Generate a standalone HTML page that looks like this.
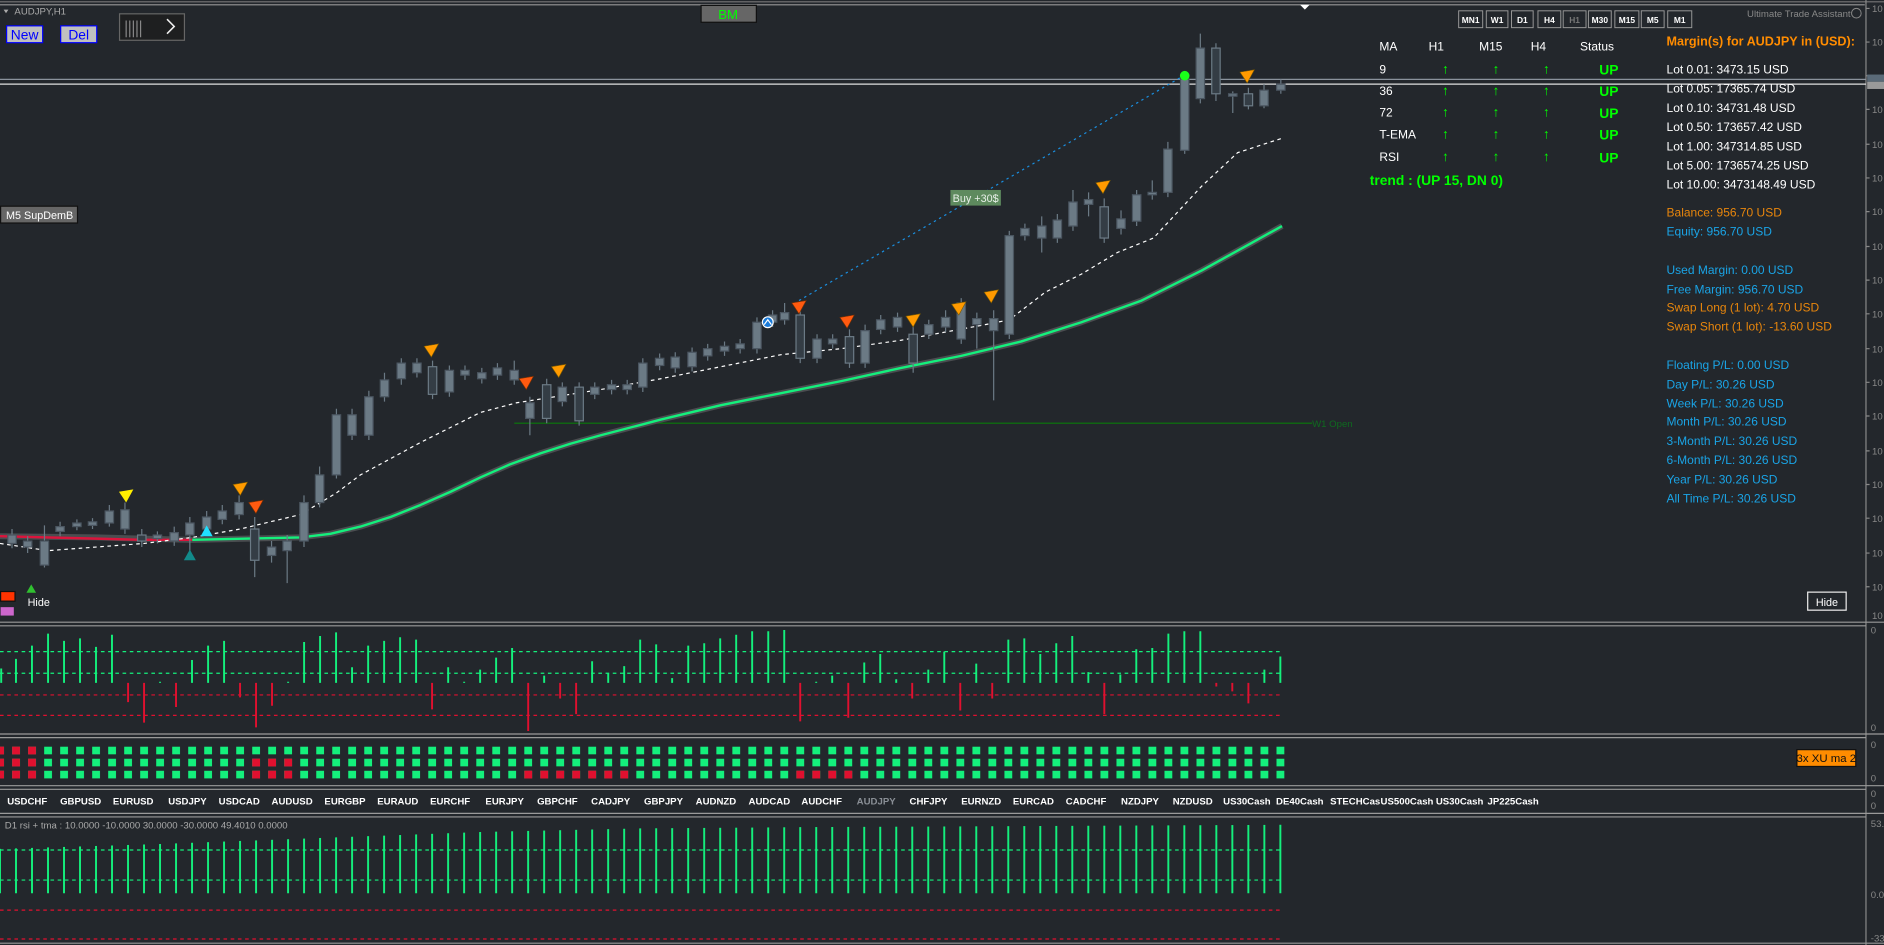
<!DOCTYPE html>
<html><head><meta charset="utf-8"><style>
html,body{margin:0;padding:0;background:#23272c;overflow:hidden}
svg{display:block}
text{font-family:"Liberation Sans",Arial,sans-serif}
</style></head><body>
<svg width="1884" height="945" viewBox="0 0 1568 786" preserveAspectRatio="none" xmlns="http://www.w3.org/2000/svg">
<defs>
<pattern id="sq" patternUnits="userSpaceOnUse" x="-3.2" y="621" width="13.32" height="10"><rect x="0" y="0" width="6.5" height="6.5" fill="#14f07c"/></pattern>
<pattern id="vb" patternUnits="userSpaceOnUse" x="-0.8" y="0" width="13.32" height="10"><rect x="0" y="0" width="1.6" height="10" fill="#14f07c"/></pattern>
</defs>
<rect width="1568" height="786" fill="#23272c"/>
<line x1="0" y1="1.5" x2="1568" y2="1.5" stroke="#777"/>
<line x1="0" y1="4" x2="1552" y2="4" stroke="#999"/>
<line x1="1553" y1="0" x2="1553" y2="786" stroke="#888"/>
<g stroke="#888"><path d="M1553 7h3M1553 35h3M1553 63h3M1553 91h3M1553 120h3M1553 148h3M1553 176h3M1553 205h3M1553 233h3M1553 261h3M1553 290h3M1553 318h3M1553 346h3M1553 375h3M1553 403h3M1553 431h3M1553 460h3M1553 488h3"/></g>
<g fill="#888" font-size="8">
<text x="1558" y="10">10</text><text x="1558" y="38">10</text><text x="1558" y="94">10</text><text x="1558" y="123">10</text><text x="1558" y="151">10</text><text x="1558" y="179">10</text><text x="1558" y="208">10</text><text x="1558" y="236">10</text><text x="1558" y="264">10</text><text x="1558" y="293">10</text><text x="1558" y="321">10</text><text x="1558" y="349">10</text><text x="1558" y="378">10</text><text x="1558" y="406">10</text><text x="1558" y="434">10</text><text x="1558" y="463">10</text><text x="1558" y="491">10</text><text x="1558" y="515">10</text>
<text x="1557" y="527">0</text><text x="1557" y="608">0</text><text x="1557" y="622">0</text><text x="1557" y="650">0</text><text x="1557" y="663">0</text><text x="1557" y="673">0</text>
<text x="1557" y="688">53.</text><text x="1557" y="747">0.0</text><text x="1557" y="783">-33</text>
</g>
<rect x="1554" y="62" width="14" height="6" fill="#5a6a78"/><rect x="1554" y="68" width="14" height="6" fill="#9a9a9a"/>
<line x1="428" y1="352" x2="1092" y2="352" stroke="#0a7a0a"/>
<text x="1092" y="355" fill="#0f6a1f" font-size="8">W1 Open</text>
<line x1="0" y1="66" x2="1553" y2="66" stroke="#8a929c"/>
<line x1="0" y1="70" x2="1553" y2="70" stroke="#e0e0e0"/>
<polyline fill="none" stroke="#4a4d50" stroke-width="5" stroke-linejoin="round" points="0,446 80,447 160,449 250,447 275,444 300,438 325,430 350,420 375,409 400,397 425,386 450,377 475,369 500,362 550,349 600,337 650,327 700,317 750,306 800,296 850,284 900,268 950,250 1000,225 1040,203 1067,188"/>
<polyline fill="none" stroke="#dc143c" stroke-width="2" points="0,446 40,447 80,448 120,449 160,449"/>
<polyline fill="none" stroke="#14f07c" stroke-width="2" stroke-linejoin="round" points="160,449 250,447 275,444 300,438 325,430 350,420 375,409 400,397 425,386 450,377 475,369 500,362 550,349 600,337 650,327 700,317 750,306 800,296 850,284 900,268 950,250 1000,225 1040,203 1067,188"/>
<polyline fill="none" stroke="#fff" stroke-width="1" stroke-dasharray="3,3" points="0,452 20,455 40,458 80,455 120,452 160,447 200,440 250,428 280,410 300,395 350,368 400,343 430,335 500,324 550,315 600,305 650,295 700,290 750,283 820,270 840,266 870,243 900,228 930,210 960,198 1000,155 1030,127 1067,115"/>
<line x1="665" y1="250" x2="985" y2="63" stroke="#1a8fe0" stroke-dasharray="2,3"/>
<path stroke="#6b7a85" stroke-width="1" fill="none" d="M10 440V456M23 446V460M37 437V472M50 434V446M64 432V441M77 431V440M91 420V438M104 418V444M118 440V455M131 442V452M145 438V454M158 430V462M172 425V444M185 420V436M199 412V432M212 430V480M226 450V468M239 445V485M253 412V455M266 388V422M280 340V398M293 340V366M307 325V366M320 310V334M334 298V320M347 298V314M360 300V332M374 304V330M387 304V316M401 306V319M414 302V316M428 300V320M441 330V362M455 315V352M468 318V338M482 318V354M495 318V332M509 316V328M522 316V328M535 298V326M549 294V308M562 293V310M576 289V309M589 286V300M603 284V296M616 282V294M630 264V294M643 258V272M653 252V270M666 256V302M680 278V302M693 278V290M707 274V306M720 270V306M733 262V278M747 260V276M760 262V310M773 266V282M787 258V276M800 248V286M813 260V290M827 258V333M840 192V282M853 186V200M867 180V210M880 178V202M893 158V192M906 160V180M919 165V202M933 175V195M946 158V188M959 150V166M972 118V164M986 60V128M999 28V86M1012 36V84M1026 76V94M1039 73V91M1052 70V90M1066 66V78"/>
<g fill="#6b7a85" stroke="#4b5661" stroke-width="1">
<rect x="6.5" y="445" width="7" height="7"/><rect x="19.5" y="450" width="7" height="5"/><rect x="33.5" y="450" width="7" height="20"/><rect x="46.5" y="438" width="7" height="4"/><rect x="60.5" y="435" width="7" height="3"/><rect x="73.5" y="434" width="7" height="3"/><rect x="87.5" y="425" width="7" height="10"/><rect x="100.5" y="424" width="7" height="16"/><rect x="127.5" y="445" width="7" height="3"/><rect x="141.5" y="443" width="7" height="7"/><rect x="154.5" y="435" width="7" height="10"/><rect x="168.5" y="430" width="7" height="10"/><rect x="181.5" y="425" width="7" height="7"/><rect x="195.5" y="418" width="7" height="10"/><rect x="222.5" y="455" width="7" height="7"/><rect x="235.5" y="450" width="7" height="8"/><rect x="249.5" y="418" width="7" height="32"/><rect x="262.5" y="395" width="7" height="23"/><rect x="276.5" y="345" width="7" height="50"/><rect x="289.5" y="345" width="7" height="17"/><rect x="303.5" y="330" width="7" height="32"/><rect x="316.5" y="316" width="7" height="14"/><rect x="330.5" y="302" width="7" height="13"/><rect x="343.5" y="302" width="7" height="8"/><rect x="370.5" y="308" width="7" height="18"/><rect x="383.5" y="308" width="7" height="4"/><rect x="397.5" y="310" width="7" height="5"/><rect x="410.5" y="306" width="7" height="6"/><rect x="424.5" y="308" width="7" height="8"/><rect x="437.5" y="335" width="7" height="13"/><rect x="464.5" y="322" width="7" height="12"/><rect x="491.5" y="322" width="7" height="6"/><rect x="505.5" y="320" width="7" height="4"/><rect x="518.5" y="320" width="7" height="4"/><rect x="531.5" y="302" width="7" height="20"/><rect x="545.5" y="298" width="7" height="6"/><rect x="558.5" y="297" width="7" height="9"/><rect x="572.5" y="293" width="7" height="12"/><rect x="585.5" y="290" width="7" height="6"/><rect x="599.5" y="288" width="7" height="4"/><rect x="612.5" y="286" width="7" height="4"/><rect x="626.5" y="268" width="7" height="22"/><rect x="639.5" y="262" width="7" height="6"/><rect x="649.5" y="260" width="7" height="6"/><rect x="676.5" y="282" width="7" height="16"/><rect x="689.5" y="282" width="7" height="4"/><rect x="716.5" y="275" width="7" height="27"/><rect x="729.5" y="266" width="7" height="8"/><rect x="743.5" y="264" width="7" height="8"/><rect x="769.5" y="270" width="7" height="8"/><rect x="783.5" y="264" width="7" height="8"/><rect x="796.5" y="252" width="7" height="30"/><rect x="809.5" y="265" width="7" height="5"/><rect x="823.5" y="265" width="7" height="10"/><rect x="836.5" y="196" width="7" height="82"/><rect x="849.5" y="190" width="7" height="6"/><rect x="863.5" y="188" width="7" height="10"/><rect x="876.5" y="183" width="7" height="15"/><rect x="889.5" y="168" width="7" height="20"/><rect x="902.5" y="166" width="7" height="4"/><rect x="929.5" y="182" width="7" height="8"/><rect x="942.5" y="162" width="7" height="22"/><rect x="955.5" y="160" width="7" height="2"/><rect x="968.5" y="124" width="7" height="36"/><rect x="982.5" y="66" width="7" height="59"/><rect x="995.5" y="40" width="7" height="42"/><rect x="1022.5" y="78" width="7" height="2"/><rect x="1048.5" y="75" width="7" height="13"/><rect x="1062.5" y="70" width="7" height="5"/>
</g>
<g fill="#343d45" stroke="#6b7a85" stroke-width="1">
<rect x="114.5" y="445" width="7" height="5"/><rect x="208.5" y="440" width="7" height="26"/><rect x="356.5" y="305" width="7" height="23"/><rect x="451.5" y="320" width="7" height="28"/><rect x="478.5" y="322" width="7" height="28"/><rect x="662.5" y="262" width="7" height="36"/><rect x="703.5" y="280" width="7" height="22"/><rect x="756.5" y="278" width="7" height="24"/><rect x="915.5" y="172" width="7" height="26"/><rect x="1008.5" y="40" width="7" height="38"/><rect x="1035.5" y="78" width="7" height="10"/>
</g>
<circle cx="986" cy="63" r="4" fill="#1aff1a"/>
<g fill="#ff9a00" stroke="#7a5a00" stroke-width="0.5">
<path d="M1032 60l12 -2l-6 11z"/><path d="M912 152l12 -2l-6 11z"/><path d="M819 243l12 -2l-6 11z"/><path d="M792 253l12 -2l-6 11z"/><path d="M754 263l12 -2l-6 11z"/><path d="M194 403l12 -2l-6 11z"/><path d="M353 288l12 -2l-6 11z"/><path d="M459 305l12 -2l-6 11z"/>
</g>
<g fill="#ff5a10" stroke="#7a3000" stroke-width="0.5">
<path d="M659 252l12 -2l-6 11z"/><path d="M699 264l12 -2l-6 11z"/><path d="M432 315l12 -2l-6 11z"/><path d="M207 418l12 -2l-6 11z"/>
</g>
<path d="M99 409l12 -2l-6 11z" fill="#ffee00"/>
<path d="M167 446l5 -9l5 9z" fill="#20e0ff"/>
<path d="M153 466l5 -9l5 9z" fill="#128a8a"/>
<path d="M22 493l4 -7l4 7z" fill="#30c030"/>
<circle cx="639" cy="268" r="5" fill="#fff"/><circle cx="639" cy="268" r="4" fill="#1a7ad8"/><path d="M636 270l3 -4l3 4" stroke="#fff" fill="none"/>
<rect x="791" y="158" width="42" height="13" fill="#5e8a5e"/>
<text x="812" y="168" fill="#e8f0e8" font-size="9" text-anchor="middle">Buy +30$</text>
<path d="M3 8l4 0l-2 3z" fill="#aaa"/>
<text x="12" y="12" fill="#aaa" font-size="8">AUDJPY,H1</text>
<rect x="5.5" y="21.5" width="30" height="14" fill="#c0c0c0" stroke="#0000ff"/>
<text x="20.5" y="33" fill="#0000ff" font-size="11.5" text-anchor="middle">New</text>
<rect x="50.5" y="21.5" width="30" height="14" fill="#c0c0c0" stroke="#0000ff"/>
<text x="65.5" y="33" fill="#0000ff" font-size="11.5" text-anchor="middle">Del</text>
<rect x="99.5" y="11.5" width="54" height="22" fill="#1e1f20" stroke="#666"/>
<path d="M105 17v14M108 17v14M111 17v14M114 17v14M117 17v14" stroke="#888"/>
<path d="M139 16l6 6l-6 6" stroke="#eee" fill="none" stroke-width="1.3"/>
<rect x="583.5" y="4.5" width="46" height="14" fill="#666" stroke="#111"/>
<text x="606" y="16" fill="#00ff00" font-size="11" text-anchor="middle">BM</text>
<path d="M1082 4h8l-4 4z" fill="#fff"/>
<rect x="0.5" y="171.5" width="64" height="14" fill="#666" stroke="#111"/>
<text x="33" y="182" fill="#fff" font-size="9" text-anchor="middle">M5 SupDemB</text>
<rect x="0.5" y="492" width="12" height="8" fill="#ff3300" stroke="#111"/>
<rect x="0.5" y="505" width="11" height="7" fill="#cc66cc"/>
<text x="23" y="504" fill="#fff" font-size="9">Hide</text>
<g fill="#23272c" stroke="#999" stroke-width="0.8">
<rect x="1214" y="9" width="20" height="14"/><rect x="1237" y="9" width="18" height="14"/><rect x="1258" y="9" width="18" height="14"/><rect x="1280" y="9" width="19" height="14"/><rect x="1301" y="9" width="19" height="14"/><rect x="1322" y="9" width="19" height="14"/><rect x="1344" y="9" width="20" height="14"/><rect x="1366" y="9" width="19" height="14"/><rect x="1388" y="9" width="20" height="14"/>
</g>
<g fill="#fff" font-size="7" font-weight="bold" text-anchor="middle">
<text x="1224" y="19">MN1</text><text x="1246" y="19">W1</text><text x="1267" y="19">D1</text><text x="1289.5" y="19">H4</text><text x="1310.5" y="19" fill="#777">H1</text><text x="1331.5" y="19">M30</text><text x="1354" y="19">M15</text><text x="1375.5" y="19">M5</text><text x="1398" y="19">M1</text>
</g>
<text x="1454" y="14" fill="#888" font-size="8">Ultimate Trade Assistant</text>
<circle cx="1545" cy="11" r="4" fill="none" stroke="#888" stroke-width="0.8"/>
<g fill="#fff" font-size="10">
<text x="1148" y="42">MA</text><text x="1189" y="42">H1</text><text x="1231" y="42">M15</text><text x="1274" y="42">H4</text><text x="1315" y="42">Status</text>
<text x="1148" y="61">9</text><text x="1148" y="79">36</text><text x="1148" y="97">72</text><text x="1148" y="115">T-EMA</text><text x="1148" y="134">RSI</text>
</g>
<g fill="#00ff00" font-size="11" text-anchor="middle">
<text x="1203" y="61">↑</text><text x="1245" y="61">↑</text><text x="1287" y="61">↑</text>
<text x="1203" y="79">↑</text><text x="1245" y="79">↑</text><text x="1287" y="79">↑</text>
<text x="1203" y="97">↑</text><text x="1245" y="97">↑</text><text x="1287" y="97">↑</text>
<text x="1203" y="115">↑</text><text x="1245" y="115">↑</text><text x="1287" y="115">↑</text>
<text x="1203" y="134">↑</text><text x="1245" y="134">↑</text><text x="1287" y="134">↑</text>
</g>
<g fill="#00ff00" font-size="11.5" font-weight="bold">
<text x="1331" y="62">UP</text><text x="1331" y="80">UP</text><text x="1331" y="98">UP</text><text x="1331" y="116">UP</text><text x="1331" y="135">UP</text>
<text x="1140" y="154">trend : (UP 15, DN 0)</text>
</g>
<text x="1387" y="38" fill="#ff8c00" font-size="10.5" font-weight="bold">Margin(s) for AUDJPY in (USD):</text>
<g fill="#fff" font-size="10">
<text x="1387" y="61">Lot 0.01: 3473.15 USD</text><text x="1387" y="77">Lot 0.05: 17365.74 USD</text><text x="1387" y="93">Lot 0.10: 34731.48 USD</text><text x="1387" y="109">Lot 0.50: 173657.42 USD</text><text x="1387" y="125">Lot 1.00: 347314.85 USD</text><text x="1387" y="141">Lot 5.00: 1736574.25 USD</text><text x="1387" y="157">Lot 10.00: 3473148.49 USD</text>
</g>
<g font-size="10">
<text x="1387" y="180" fill="#e8860c">Balance: 956.70 USD</text>
<text x="1387" y="196" fill="#1aa4e6">Equity: 956.70 USD</text>
<text x="1387" y="228" fill="#1aa4e6">Used Margin: 0.00 USD</text>
<text x="1387" y="244" fill="#1aa4e6">Free Margin: 956.70 USD</text>
<text x="1387" y="259" fill="#e8860c">Swap Long (1 lot): 4.70 USD</text>
<text x="1387" y="275" fill="#e8860c">Swap Short (1 lot): -13.60 USD</text>
<g fill="#1aa4e6">
<text x="1387" y="307">Floating P/L: 0.00 USD</text><text x="1387" y="323">Day P/L: 30.26 USD</text><text x="1387" y="339">Week P/L: 30.26 USD</text><text x="1387" y="354">Month P/L: 30.26 USD</text><text x="1387" y="370">3-Month P/L: 30.26 USD</text><text x="1387" y="386">6-Month P/L: 30.26 USD</text><text x="1387" y="402">Year P/L: 30.26 USD</text><text x="1387" y="418">All Time P/L: 30.26 USD</text>
</g>
</g>
<rect x="1504.5" y="492.5" width="32" height="15" fill="#23272c" stroke="#eee"/>
<text x="1520.5" y="504" fill="#fff" font-size="9" text-anchor="middle">Hide</text>
<g stroke="#9a9a9a" stroke-width="1">
<path d="M0 517.5H1568M0 520.5H1553M0 610.5H1568M0 613.5H1553M0 653.5H1568M0 656.5H1553M0 676.5H1568M0 679.5H1553M0 784.5H1568"/>
</g>
<g stroke-dasharray="3,3" stroke-width="1">
<line x1="0" y1="542" x2="1067" y2="542" stroke="#14f07c"/>
<line x1="0" y1="560" x2="1067" y2="560" stroke="#14f07c"/>
<line x1="0" y1="578" x2="1067" y2="578" stroke="#e0102f"/>
<line x1="0" y1="595" x2="1067" y2="595" stroke="#e0102f"/>
</g>
<path stroke="#14f07c" stroke-width="1.6" fill="none" d="M1 568v-12M13.3 568v-20M26.6 568v-31M40 568v-41M53.3 568v-35M66.6 568v-37M79.9 568v-30M93.2 568v-40M133.2 568v-1M159.8 568v-19M173.2 568v-31M186.5 568v-35M239.8 568v-1M253.1 568v-34M266.4 568v-39M279.7 568v-42M293 568v-13M306.4 568v-31M319.7 568v-35M333 568v-38M346.3 568v-36M373 568v-13M386.3 568v-1M399.6 568v-11M412.9 568v-21M426.2 568v-29M452.9 568v-6M492.8 568v-18M506.2 568v-8M519.5 568v-14M532.8 568v-36M546.1 568v-32M559.4 568v-4M572.8 568v-31M586.1 568v-33M599.4 568v-37M612.7 568v-40M626 568v-43M639.4 568v-43M652.7 568v-44M679.3 568v-1M692.6 568v-6M719.3 568v-17M732.6 568v-24M745.9 568v-3M772.6 568v-11M785.9 568v-26M812.5 568v-16M839.2 568v-36M852.5 568v-37M865.8 568v-24M879.1 568v-33M892.4 568v-39M905.8 568v-9M932.4 568v-7M945.7 568v-28M959 568v-29M972.4 568v-41M985.7 568v-43M999 568v-43M1052.3 568v-11M1065.6 568v-22"/>
<path stroke="#e0102f" stroke-width="1.6" fill="none" d="M106.6 568v16M119.9 568v33M146.5 568v20M199.8 568v12M213.1 568v37M226.4 568v19M359.6 568v22M439.6 568v40M466.2 568v13M479.5 568v26M666 568v32M706 568v29M759.2 568v13M799.2 568v23M825.8 568v13M919.1 568v26M1012.3 568v3M1025.6 568v7M1039 568v17"/>
<rect x="0" y="621" width="1070" height="6.5" fill="url(#sq)"/>
<rect x="0" y="631" width="1070" height="6.5" fill="url(#sq)"/>
<rect x="0" y="641" width="1070" height="6.5" fill="url(#sq)"/>
<g fill="#e0102f">
<rect x="0" y="621" width="3.3" height="6.5"/><rect x="10.1" y="621" width="6.5" height="6.5"/><rect x="23.4" y="621" width="6.5" height="6.5"/>
<rect x="0" y="631" width="3.3" height="6.5"/><rect x="10.1" y="631" width="6.5" height="6.5"/><rect x="23.4" y="631" width="6.5" height="6.5"/>
<rect x="0" y="641" width="3.3" height="6.5"/><rect x="10.1" y="641" width="6.5" height="6.5"/><rect x="23.4" y="641" width="6.5" height="6.5"/>
<rect x="209.9" y="631" width="6.5" height="6.5"/><rect x="223.2" y="631" width="6.5" height="6.5"/><rect x="236.6" y="631" width="6.5" height="6.5"/>
<rect x="209.9" y="641" width="6.5" height="6.5"/><rect x="223.2" y="641" width="6.5" height="6.5"/><rect x="236.6" y="641" width="6.5" height="6.5"/>
<rect x="436.4" y="641" width="6.5" height="6.5"/><rect x="449.7" y="641" width="6.5" height="6.5"/><rect x="463" y="641" width="6.5" height="6.5"/><rect x="476.3" y="641" width="6.5" height="6.5"/><rect x="489.6" y="641" width="6.5" height="6.5"/><rect x="503" y="641" width="6.5" height="6.5"/><rect x="516.3" y="641" width="6.5" height="6.5"/>
<rect x="662.8" y="641" width="6.5" height="6.5"/><rect x="676.1" y="641" width="6.5" height="6.5"/><rect x="689.4" y="641" width="6.5" height="6.5"/><rect x="702.8" y="641" width="6.5" height="6.5"/>
</g>
<rect x="1495.5" y="623.5" width="49" height="14" fill="#ff8c00" stroke="#111"/>
<text x="1520" y="634" fill="#111" font-size="9.5" text-anchor="middle">3x XU ma 2</text>
<g fill="#fff" font-size="8" font-weight="bold">
<text x="6" y="669">USDCHF</text><text x="50" y="669">GBPUSD</text><text x="94" y="669">EURUSD</text><text x="140" y="669">USDJPY</text><text x="182" y="669">USDCAD</text><text x="226" y="669">AUDUSD</text><text x="270" y="669">EURGBP</text><text x="314" y="669">EURAUD</text><text x="358" y="669">EURCHF</text><text x="404" y="669">EURJPY</text><text x="447" y="669">GBPCHF</text><text x="492" y="669">CADJPY</text><text x="536" y="669">GBPJPY</text><text x="579" y="669">AUDNZD</text><text x="623" y="669">AUDCAD</text><text x="667" y="669">AUDCHF</text><text x="713" y="669" fill="#8a8f96">AUDJPY</text><text x="757" y="669">CHFJPY</text><text x="800" y="669">EURNZD</text><text x="843" y="669">EURCAD</text><text x="887" y="669">CADCHF</text><text x="933" y="669">NZDJPY</text><text x="976" y="669">NZDUSD</text><text x="1018" y="669">US30Cash</text><text x="1062" y="669">DE40Cash</text><text x="1107" y="669">STECHCas</text><text x="1149" y="669">US500Cash</text><text x="1195" y="669">US30Cash</text><text x="1238" y="669">JP225Cash</text>
</g>
<text x="4" y="689" fill="#aaa" font-size="8">D1 rsi + tma  :  10.0000 -10.0000 30.0000 -30.0000 49.4010 0.0000</text>
<polygon points="0,743 0,706 133,702 266,697 400,692 533,689 666,688 1067,686 1067,743" fill="url(#vb)"/>
<g stroke-dasharray="3,3" stroke-width="1">
<line x1="0" y1="707" x2="1067" y2="707" stroke="#14f07c"/>
<line x1="0" y1="732" x2="1067" y2="732" stroke="#14f07c"/>
<line x1="0" y1="757" x2="1067" y2="757" stroke="#e0102f"/>
<line x1="0" y1="781" x2="1067" y2="781" stroke="#e0102f"/>
</g>
</svg>
</body></html>
